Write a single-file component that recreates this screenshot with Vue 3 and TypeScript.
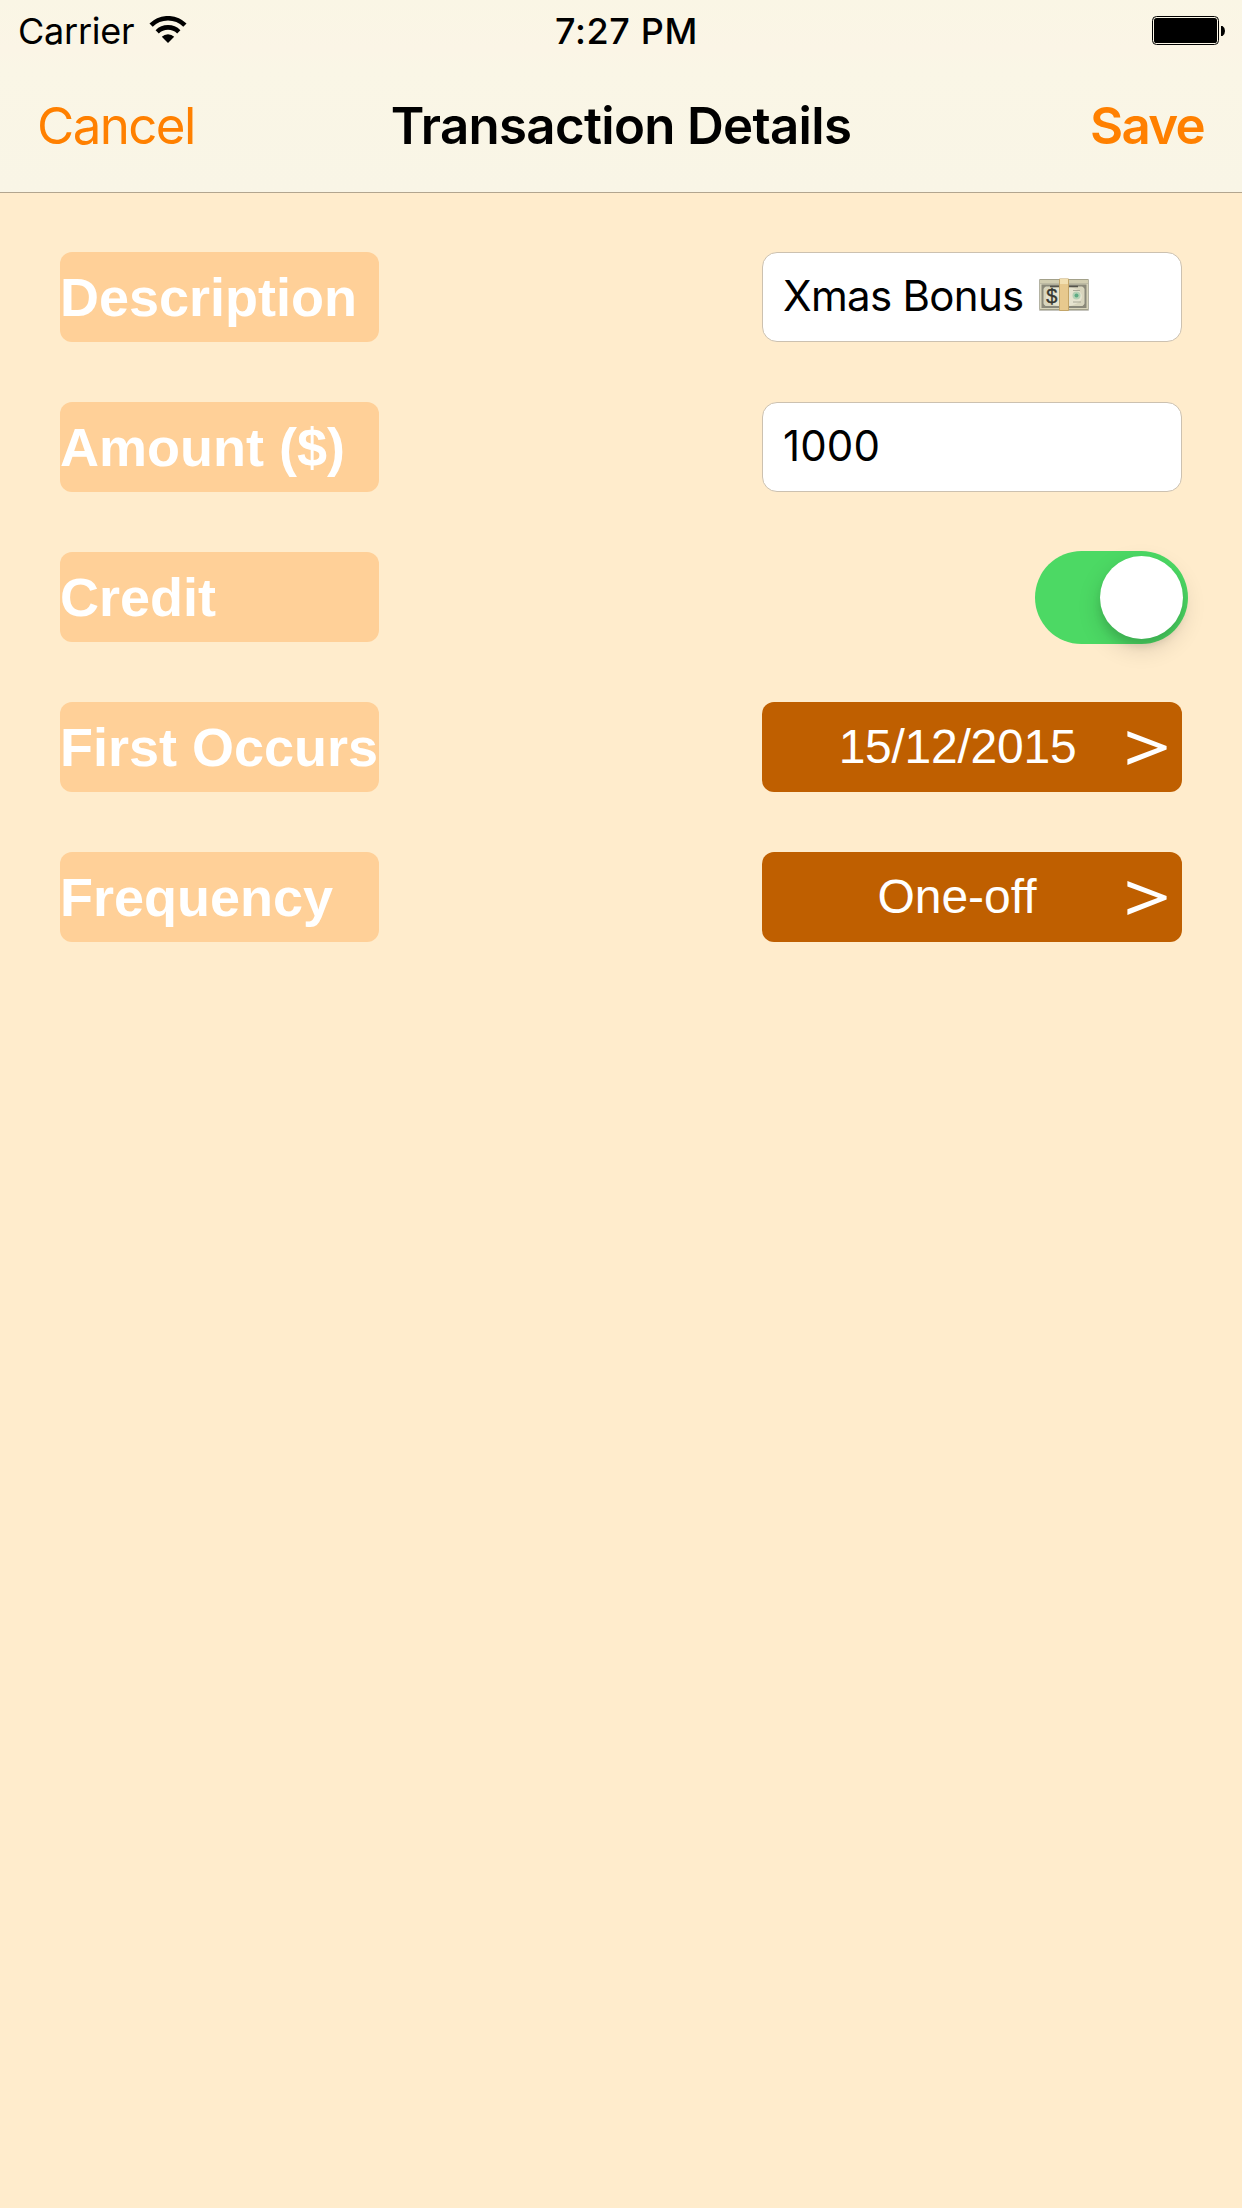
<script setup lang="ts">
import { ref } from 'vue'

const description = ref('Xmas Bonus')
const amount = ref('1000')
const credit = ref(true)
const firstOccurs = ref('15/12/2015')
const frequency = ref('One-off')
</script>

<template>
  <div class="screen">
    <header class="header">
      <div class="status">
        <div class="side">
          <span class="carrier">Carrier</span>
          <svg class="wifi" width="38" height="28" viewBox="0 0 38 28">
            <path d="M2.1 9.2A24 24 0 0 1 35.9 9.2" fill="none" stroke="#000" stroke-width="4.6" />
            <path d="M8.2 15.8A15.4 15.4 0 0 1 29.8 15.8" fill="none" stroke="#000" stroke-width="4.6" />
            <path d="M12.8 20.7A8.9 8.9 0 0 1 25.2 20.7L19 27Z" fill="#000" />
          </svg>
        </div>
        <span class="time">7:27 PM</span>
        <div class="side end">
          <svg class="battery" width="74" height="29" viewBox="0 0 74 29">
            <rect x="0.5" y="0.5" width="66" height="28" rx="4" fill="none" stroke="#000" />
            <rect x="2" y="2" width="63" height="25" rx="2.6" fill="#000" />
            <path d="M69 10H70.5Q73 11.5 73 15T70.5 20H69Z" fill="#000" />
          </svg>
        </div>
      </div>
      <nav class="nav">
        <div class="side"><span class="cancel">Cancel</span></div>
        <h1 class="title">Transaction Details</h1>
        <div class="side end"><span class="save">Save</span></div>
      </nav>
    </header>

    <main class="form">
      <div class="row">
        <span class="label">Description</span>
        <div class="field">
          <span class="value">{{ description }}</span>
          <svg class="cash" width="52" height="34" viewBox="0 0 52 34">
            <rect x="1" y="1" width="50" height="32" rx="1" fill="#8b8a7c" opacity="0.5" />
            <rect x="1.5" y="1" width="49" height="31" rx="1" fill="#a3a18a" />
            <rect x="2" y="2" width="48" height="3" fill="#d1cdb0" />
            <rect x="2" y="5.5" width="48" height="25.5" fill="#d8d4bb" />
            <rect x="4.5" y="7.5" width="43" height="21.5" fill="#d8d5bd" stroke="#8a897b" stroke-width="2" />
            <ellipse cx="26" cy="18.5" rx="18" ry="10" fill="#e6e3cf" />
            <path d="M4 7h5L4 12ZM48 7h-5l5 5ZM4 29.5h5l-5-5ZM48 29.5h-5l5-5Z" fill="#8b8979" />
            <path d="M12 8.5h9M31 8.5h9" stroke="#55544b" stroke-width="1.5" />
            <text x="8.3" y="25.2" class="bill">$</text>
            <circle cx="38.5" cy="17.5" r="4" fill="#b4d1b5" />
            <circle cx="38.5" cy="17.5" r="2" fill="#5dab83" />
            <path d="M35 12.5h7M35 24h8" stroke="#aaa997" stroke-width="1" />
            <rect x="21" y="0.5" width="10" height="32.5" rx="1" fill="#c3a568" />
            <rect x="22" y="1" width="8" height="31" fill="#e7c98e" />
            <rect x="22" y="1" width="8" height="5" fill="#f2dfb0" />
          </svg>
        </div>
      </div>
      <div class="row">
        <span class="label">Amount ($)</span>
        <div class="field"><span class="value number">{{ amount }}</span></div>
      </div>
      <div class="row">
        <span class="label">Credit</span>
        <div class="switch" :class="{ on: credit }"><div class="knob"></div></div>
      </div>
      <div class="row">
        <span class="label">First Occurs</span>
        <div class="button">
          <span class="choice date">{{ firstOccurs }}</span>
          <svg class="arrow" width="41" height="36" viewBox="0 0 41 36">
            <path d="M1.4 0.9L40.6 15.9V19.5L1.4 35V29.3L32 17.7L1.4 6.6Z" fill="#fff" />
          </svg>
        </div>
      </div>
      <div class="row">
        <span class="label">Frequency</span>
        <div class="button">
          <span class="choice">{{ frequency }}</span>
          <svg class="arrow" width="41" height="36" viewBox="0 0 41 36">
            <path d="M1.4 0.9L40.6 15.9V19.5L1.4 35V29.3L32 17.7L1.4 6.6Z" fill="#fff" />
          </svg>
        </div>
      </div>
    </main>
  </div>
</template>

<style>
body {
  background: #ffeccc;
}
</style>

<style scoped>
.screen {
  width: 1242px;
  height: 2208px;
  overflow: hidden;
  background: #ffeccc;
  font-family: Inter, sans-serif;
  color: #000;
}
.header {
  box-sizing: border-box;
  height: 193px;
  border-bottom: 1px solid #b2a58f;
  background: linear-gradient(#faf6e5 0, #fbf5e6 50px, #faf6e6 70px, #f9f5e6 192px);
}
.status {
  display: flex;
  align-items: center;
  box-sizing: border-box;
  height: 61px;
  padding: 1px 16px 0 18px;
  font-size: 36px;
}
.side {
  display: flex;
  flex: 1;
  align-items: center;
}
.end {
  justify-content: flex-end;
}
.carrier {
  letter-spacing: -0.25px;
}
.wifi {
  margin: 0 0 2px 15px;
}
.battery {
  margin-bottom: 1px;
}
.time {
  padding-left: 9px;
  font-weight: 500;
  letter-spacing: 0.6px;
}
.nav {
  display: flex;
  align-items: center;
  height: 129px;
  padding: 0 38px 0 37px;
  font-size: 51px;
}
.title {
  margin: 0;
  padding-left: 1px;
  font-size: 51px;
  font-weight: 600;
  letter-spacing: -0.7px;
}
.cancel {
  color: #ff8000;
  letter-spacing: -1.6px;
}
.save {
  color: #ff8000;
  font-weight: 600;
  letter-spacing: -1.7px;
}
.form {
  display: flex;
  flex-direction: column;
  gap: 60px;
  padding: 59px 60px 0;
}
.row {
  display: flex;
  align-items: center;
  justify-content: space-between;
  height: 90px;
}
.label {
  width: 319px;
  height: 90px;
  border-radius: 12px;
  background: #ffd098;
  color: #fff;
  font: bold 54px/90px "Liberation Sans", Arial, sans-serif;
  white-space: nowrap;
}
.field {
  display: flex;
  align-items: center;
  box-sizing: border-box;
  width: 420px;
  height: 90px;
  padding: 0 20px 4px;
  border: 1px solid #ccc1b0;
  border-radius: 15px;
  background: #fff;
  font-size: 42px;
}
.value {
  letter-spacing: -0.7px;
}
.number {
  letter-spacing: 0.1px;
}
.cash {
  margin-left: 14px;
}
.switch {
  display: flex;
  align-items: center;
  box-sizing: border-box;
  width: 153px;
  height: 93px;
  margin-right: -6px;
  padding: 0 5px;
  border-radius: 47px;
  background: #e5e5e5;
}
.on {
  justify-content: flex-end;
  background: #4cd964;
}
.knob {
  width: 83px;
  height: 83px;
  border-radius: 50%;
  background: #fff;
  box-shadow: 0 9px 24px rgba(0, 0, 0, 0.14), 0 7px 8px rgba(0, 0, 0, 0.1);
}
.button {
  display: flex;
  align-items: center;
  box-sizing: border-box;
  width: 420px;
  height: 90px;
  padding-right: 15px;
  border-radius: 12px;
  background: #bf5f00;
  color: #fff;
  font: 48px/90px "Liberation Sans", Arial, sans-serif;
}
.choice {
  flex: 1;
  padding-left: 26px;
  text-align: center;
}
.date {
  padding-left: 27px;
  letter-spacing: -0.25px;
}
.arrow {
  margin-top: 2px;
}
.bill {
  font: 20px "Liberation Sans", Arial, sans-serif;
  fill: #36362f;
  stroke: #36362f;
  stroke-width: 0.4px;
}
</style>
